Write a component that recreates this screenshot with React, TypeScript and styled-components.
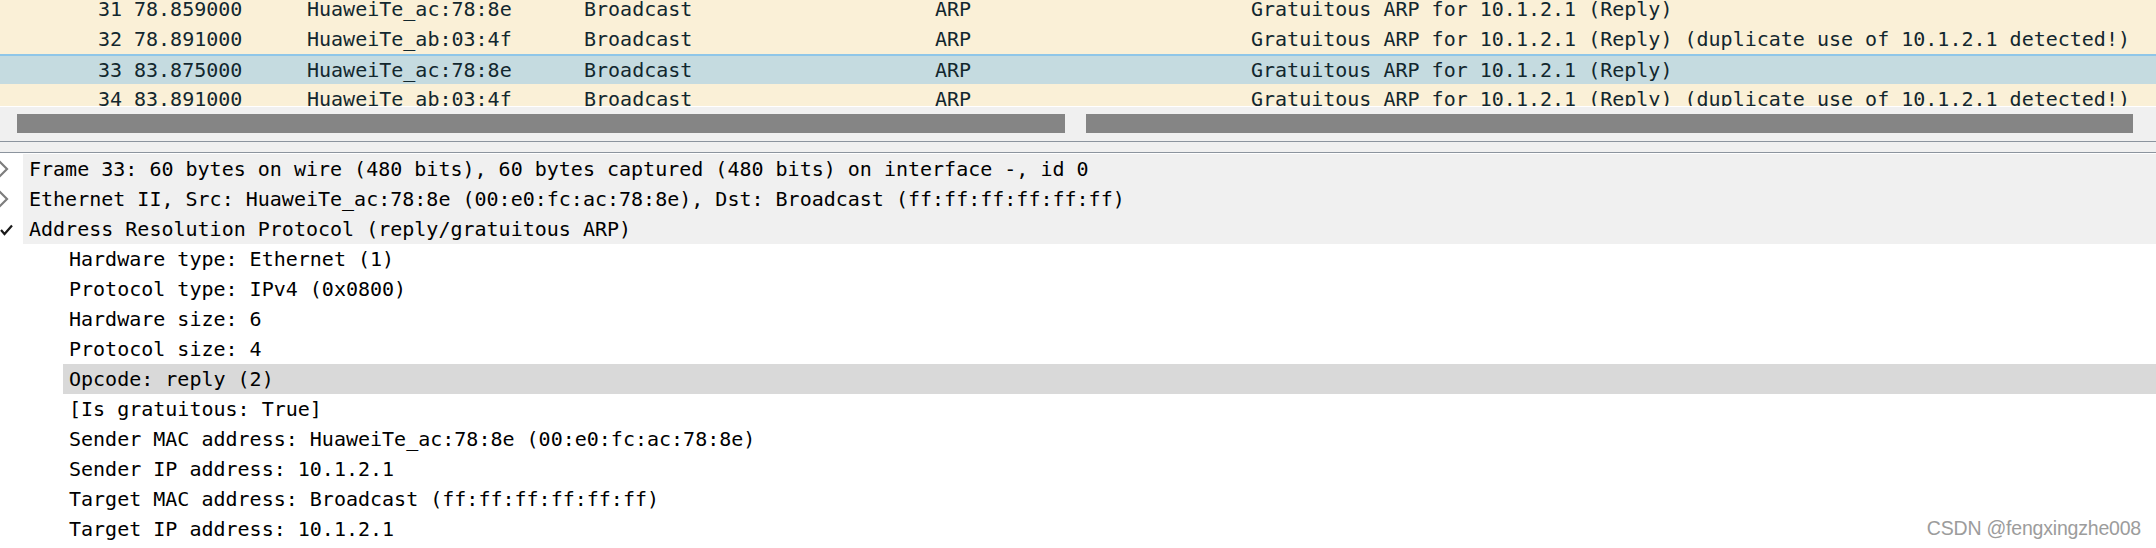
import React from "react";
import styled, { createGlobalStyle } from "styled-components";

const GlobalStyle = createGlobalStyle`
  html, body {
    margin: 0;
    padding: 0;
    background: #ffffff;
    overflow: hidden;
  }
  * { box-sizing: border-box; }
`;

const MONO = `"DejaVu Sans Mono", "Liberation Mono", monospace`;

const Page = styled.div`
  position: relative;
  width: 2156px;
  height: 548px;
  overflow: hidden;
  background: #ffffff;
  font-family: ${MONO};
  font-size: 20px;
`;

const PacketList = styled.div`
  height: 106px;
  overflow: hidden;
  background: #faf0d7;
`;

const PacketRows = styled.div`
  margin-top: -6px;
`;

const PacketRow = styled.div<{ $selected?: boolean }>`
  display: grid;
  grid-template-columns: 134px 173px 277px 351px 316px 1fr;
  height: 30px;
  align-items: center;
  white-space: nowrap;
  color: #12272e;
  background: ${(p) => (p.$selected ? "#c5dbe0" : "#faf0d7")};
  border-top: ${(p) => (p.$selected ? "2px solid #8fc6e8" : "none")};
  line-height: 28px;
`;

const Cell = styled.span<{ $right?: boolean }>`
  overflow: hidden;
  text-align: ${(p) => (p.$right ? "right" : "left")};
  padding-right: ${(p) => (p.$right ? "12px" : "0")};
`;

const ScrollArea = styled.div`
  height: 35px;
  border-top: 1px solid #ffffff;
  background: #f0f0f0;
  padding: 7px 0 0 17px;
  display: flex;
  gap: 21px;
`;

const ScrollThumb = styled.div<{ $w: number }>`
  width: ${(p) => p.$w}px;
  height: 19px;
  background: #858585;
`;

const Splitter = styled.div`
  height: 12px;
  background: #f0f0f0;
  border-top: 1px solid #8c949e;
  border-bottom: 1px solid #8c949e;
`;

const Tree = styled.div`
  padding-top: 1px;
`;

const TopRow = styled.div`
  display: grid;
  grid-template-columns: 23px 1fr;
  height: 30px;
  align-items: center;
`;

const Toggle = styled.div`
  height: 30px;
  display: flex;
  align-items: center;
`;

const TopLabel = styled.div`
  height: 30px;
  line-height: 30px;
  background: #f0f0f0;
  padding-left: 6px;
  color: #000000;
  white-space: nowrap;
`;

const ChildRow = styled.div`
  height: 30px;
  padding-left: 63px;
`;

const ChildLabel = styled.div<{ $selected?: boolean }>`
  height: 30px;
  line-height: 30px;
  padding-left: 6px;
  color: #000000;
  white-space: nowrap;
  background: ${(p) => (p.$selected ? "#d9d9d9" : "transparent")};
`;

const Watermark = styled.div`
  position: absolute;
  right: 15px;
  bottom: 8px;
  font-family: "Liberation Sans", Arial, sans-serif;
  font-size: 19.5px;
  color: #9c9c9c;
  letter-spacing: -0.2px;
  line-height: 24px;
`;

const Chevron = () => (
  <svg width="12" height="20" viewBox="0 0 12 20" style={{ marginLeft: -3 }}>
    <polyline
      points="2,2 10,10 2,18"
      fill="none"
      stroke="#7d7d7d"
      strokeWidth="2.2"
    />
  </svg>
);

const Check = () => (
  <svg width="13" height="12" viewBox="0 0 13 12" style={{ marginTop: 2 }}>
    <polyline
      points="1,6 4.5,10 12,1.5"
      fill="none"
      stroke="#1a1a1a"
      strokeWidth="2.2"
    />
  </svg>
);

type Packet = {
  no: string;
  time: string;
  src: string;
  dst: string;
  proto: string;
  info: string;
  selected?: boolean;
};

const packets: Packet[] = [
  { no: "31", time: "78.859000", src: "HuaweiTe_ac:78:8e", dst: "Broadcast", proto: "ARP", info: "Gratuitous ARP for 10.1.2.1 (Reply)" },
  { no: "32", time: "78.891000", src: "HuaweiTe_ab:03:4f", dst: "Broadcast", proto: "ARP", info: "Gratuitous ARP for 10.1.2.1 (Reply) (duplicate use of 10.1.2.1 detected!)" },
  { no: "33", time: "83.875000", src: "HuaweiTe_ac:78:8e", dst: "Broadcast", proto: "ARP", info: "Gratuitous ARP for 10.1.2.1 (Reply)", selected: true },
  { no: "34", time: "83.891000", src: "HuaweiTe_ab:03:4f", dst: "Broadcast", proto: "ARP", info: "Gratuitous ARP for 10.1.2.1 (Reply) (duplicate use of 10.1.2.1 detected!)" },
];

const topItems = [
  { label: "Frame 33: 60 bytes on wire (480 bits), 60 bytes captured (480 bits) on interface -, id 0", open: false },
  { label: "Ethernet II, Src: HuaweiTe_ac:78:8e (00:e0:fc:ac:78:8e), Dst: Broadcast (ff:ff:ff:ff:ff:ff)", open: false },
  { label: "Address Resolution Protocol (reply/gratuitous ARP)", open: true },
];

const children = [
  { label: "Hardware type: Ethernet (1)" },
  { label: "Protocol type: IPv4 (0x0800)" },
  { label: "Hardware size: 6" },
  { label: "Protocol size: 4" },
  { label: "Opcode: reply (2)", selected: true },
  { label: "[Is gratuitous: True]" },
  { label: "Sender MAC address: HuaweiTe_ac:78:8e (00:e0:fc:ac:78:8e)" },
  { label: "Sender IP address: 10.1.2.1" },
  { label: "Target MAC address: Broadcast (ff:ff:ff:ff:ff:ff)" },
  { label: "Target IP address: 10.1.2.1" },
];

export default function App() {
  return (
    <>
      <GlobalStyle />
      <Page>
        <PacketList>
          <PacketRows>
            {packets.map((p) => (
              <PacketRow key={p.no} $selected={p.selected}>
                <Cell $right>{p.no}</Cell>
                <Cell>{p.time}</Cell>
                <Cell>{p.src}</Cell>
                <Cell>{p.dst}</Cell>
                <Cell>{p.proto}</Cell>
                <Cell>{p.info}</Cell>
              </PacketRow>
            ))}
          </PacketRows>
        </PacketList>
        <ScrollArea>
          <ScrollThumb $w={1048} />
          <ScrollThumb $w={1047} />
        </ScrollArea>
        <Splitter />
        <Tree>
          {topItems.map((t) => (
            <TopRow key={t.label}>
              <Toggle>{t.open ? <Check /> : <Chevron />}</Toggle>
              <TopLabel>{t.label}</TopLabel>
            </TopRow>
          ))}
          {children.map((c) => (
            <ChildRow key={c.label}>
              <ChildLabel $selected={c.selected}>{c.label}</ChildLabel>
            </ChildRow>
          ))}
        </Tree>
        <Watermark>CSDN @fengxingzhe008</Watermark>
      </Page>
    </>
  );
}
